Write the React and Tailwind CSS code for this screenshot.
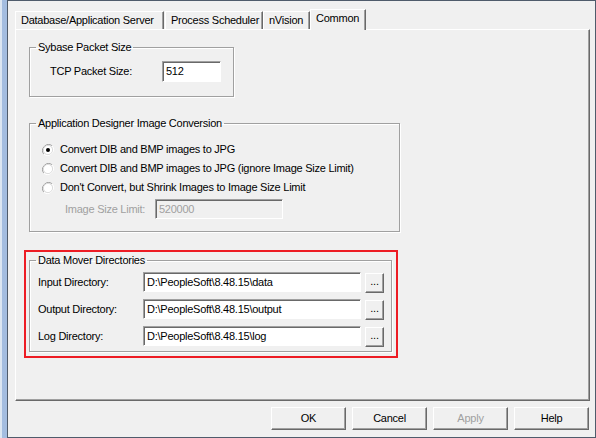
import React from 'react'

const font = { fontFamily: '"Liberation Sans", Arial, sans-serif', letterSpacing: '-0.25px' }

function Radio({ checked }) {
  return (
    <svg width="12" height="12" viewBox="0 0 12 12" className="shrink-0">
      <path d="M10.2 1.8 A6 6 0 0 0 1.8 10.2" fill="none" stroke="#a0a0a0" strokeWidth="1" />
      <path d="M1.8 10.2 A6 6 0 0 0 10.2 1.8" fill="none" stroke="#ffffff" strokeWidth="1" />
      <circle cx="6" cy="6" r="4.6" fill="#ffffff" stroke="#d4d4d4" strokeWidth="0.8" />
      {checked && <circle cx="6" cy="6" r="2" fill="#000000" />}
    </svg>
  )
}

function Sunken({ className = '', disabled, children }) {
  return (
    <div
      className={`flex items-center border border-t-[#a0a0a0] border-l-[#a0a0a0] border-r-white border-b-white shadow-[inset_1px_1px_0_#696969] pl-[3px] text-[11px] leading-none whitespace-nowrap ${
        disabled ? 'bg-[#f0f0f0] text-[#a0a0a0]' : 'bg-white text-black'
      } ${className}`}
    >
      {children}
    </div>
  )
}

function Raised({ className = '', children, disabled }) {
  return (
    <button
      className={`flex items-center justify-center bg-[#f0f0f0] border border-t-white border-l-white border-r-[#696969] border-b-[#696969] shadow-[inset_-1px_-1px_0_#a0a0a0] text-[11px] leading-none ${
        disabled ? 'text-[#a0a0a0]' : 'text-black'
      } ${className}`}
    >
      {children}
    </button>
  )
}

function Group({ title, className = '', children }) {
  return (
    <fieldset className={`border border-[#a0a0a0] shadow-[inset_1px_1px_0_#ffffff,1px_1px_0_#ffffff] ${className}`}>
      <legend className="ml-[6px] px-[2px] text-[11px] leading-[13px] text-black">{title}</legend>
      {children}
    </fieldset>
  )
}

function Tab({ label, active, className = '' }) {
  return (
    <div
      className={`flex items-center shrink-0 whitespace-nowrap border-t border-l border-white border-r border-r-[#696969] shadow-[inset_-1px_0_0_#a0a0a0] text-[11px] leading-none text-black ${
        active ? 'h-[21px] px-[5px] -mb-px relative bg-[#f0f0f0] pb-[3px]' : 'h-[18px] px-[5px]'
      } ${className}`}
    >
      {label}
    </div>
  )
}

export default function App() {
  return (
    <div className="w-[596px] h-[438px] flex bg-[#f0f0f0] overflow-hidden" style={font}>
      <div className="w-[8px] h-full flex shrink-0">
        <div className="w-[2px] bg-[#dce6f2]" />
        <div className="w-[5px] bg-[#a4bde0]" />
        <div className="w-[1px] bg-[#4f5b6b]" />
      </div>
      <div className="flex-1 flex flex-col border-t border-r border-b border-[#4f5b6b]">
        {/* tab strip */}
        <div className="flex items-end pl-[7px] pt-[7px] h-[28px]">
          <Tab label="Database/Application Server" className="w-[149px]" />
          <Tab label="Process Scheduler" className="w-[98px] ml-[1px]" />
          <Tab label="nVision" className="w-[47px]" />
          <Tab label="Common" active className="w-[56px]" />
        </div>

        {/* panel */}
        <div className="ml-[7px] w-[575px] h-[372px] border-t border-l border-white border-r border-b border-r-[#696969] border-b-[#696969] shadow-[inset_-1px_-1px_0_#a0a0a0] flex flex-col">
          <Group title="Sybase Packet Size" className="ml-[13px] mt-[11px] w-[205px] h-[56px]">
            <div className="flex items-center pt-[7px] pl-[20px]">
              <span className="text-[11px] w-[112px]">TCP Packet Size:</span>
              <Sunken className="w-[59px] h-[21px]">512</Sunken>
            </div>
          </Group>

          <Group title="Application Designer Image Conversion" className="ml-[13px] mt-[20px] w-[371px] h-[115px]">
            <div className="flex flex-col pt-[10px] pl-[12px]">
              {[
                ['Convert DIB and BMP images to JPG', true],
                ['Convert DIB and BMP images to JPG (ignore Image Size Limit)', false],
                ["Don't Convert, but Shrink Images to Image Size Limit", false],
              ].map(([t, c]) => (
                <div key={t} className="flex items-center h-[19px] gap-[6px] text-[11px]">
                  <Radio checked={c} />
                  <span>{t}</span>
                </div>
              ))}
              <div className="flex items-center mt-[2px] pl-[23px]">
                <span className="text-[11px] text-[#a0a0a0] w-[90px]">Image Size Limit:</span>
                <Sunken disabled className="w-[128px] h-[20px]">520000</Sunken>
              </div>
            </div>
          </Group>

          <div className="ml-[8px] mt-[18px] w-[374px] h-[108px] border-2 border-[#ed1c24] pt-[2px] pl-[3px]">
            <Group title="Data Mover Directories" className="w-[363px] h-[98px]">
              <div className="flex flex-col gap-[7px] pt-[5px] pl-[8px]">
                {[
                  ['Input Directory:', 'D:\\PeopleSoft\\8.48.15\\data'],
                  ['Output Directory:', 'D:\\PeopleSoft\\8.48.15\\output'],
                  ['Log Directory:', 'D:\\PeopleSoft\\8.48.15\\log'],
                ].map(([l, v]) => (
                  <div key={l} className="flex items-start h-[20px]">
                    <span className="text-[11px] w-[105px] pt-[2px]">{l}</span>
                    <Sunken className="w-[218px] h-[20px]">{v}</Sunken>
                    <Raised className="ml-[4px] mt-[1px] w-[19px] h-[20px] pb-[4px]">...</Raised>
                  </div>
                ))}
              </div>
            </Group>
          </div>
        </div>

        {/* buttons */}
        <div className="flex justify-end gap-[6px] mt-[6px] pr-[6px]">
          <Raised className="w-[75px] h-[23px]">OK</Raised>
          <Raised className="w-[75px] h-[23px]">Cancel</Raised>
          <Raised disabled className="w-[75px] h-[23px]">Apply</Raised>
          <Raised className="w-[75px] h-[23px]">Help</Raised>
        </div>
      </div>
    </div>
  )
}
